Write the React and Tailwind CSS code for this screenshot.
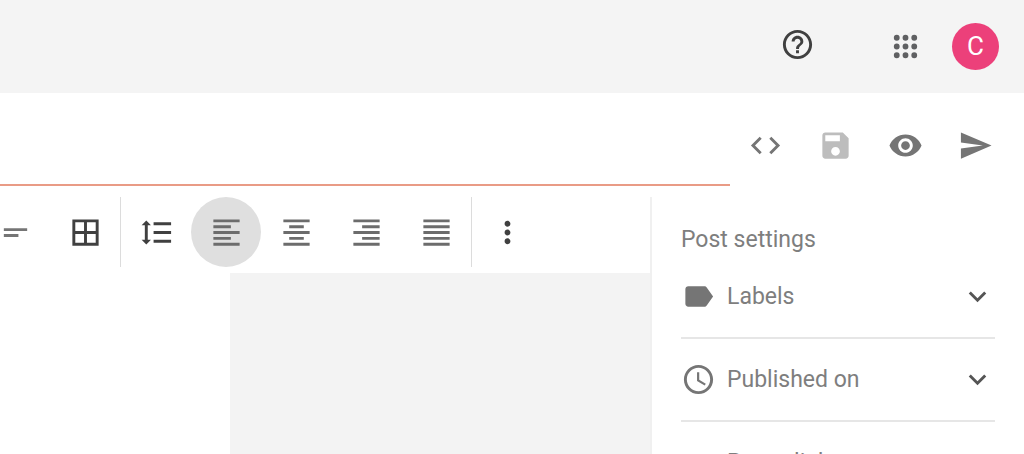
import React, { useState } from 'react';
import clsx from 'clsx';

const icons = {
  help: 'M11 18h2v-2h-2v2zm1-16C6.48 2 2 6.48 2 12s4.48 10 10 10 10-4.48 10-10S17.52 2 12 2zm0 18c-4.41 0-8-3.59-8-8s3.59-8 8-8 8 3.59 8 8-3.59 8-8 8zm0-14c-2.21 0-4 1.79-4 4h2c0-1.1.9-2 2-2s2 .9 2 2c0 2-3 1.75-3 5h2c0-2.25 3-2.5 3-5 0-2.21-1.79-4-4-4z',
  apps: 'M6 8a2 2 0 1 0 0-4 2 2 0 0 0 0 4zm6 0a2 2 0 1 0 0-4 2 2 0 0 0 0 4zm6 0a2 2 0 1 0 0-4 2 2 0 0 0 0 4zM6 14a2 2 0 1 0 0-4 2 2 0 0 0 0 4zm6 0a2 2 0 1 0 0-4 2 2 0 0 0 0 4zm6 0a2 2 0 1 0 0-4 2 2 0 0 0 0 4zM6 20a2 2 0 1 0 0-4 2 2 0 0 0 0 4zm6 0a2 2 0 1 0 0-4 2 2 0 0 0 0 4zm6 0a2 2 0 1 0 0-4 2 2 0 0 0 0 4z',
  code: 'M9.4 16.6L4.8 12l4.6-4.6L8 6l-6 6 6 6 1.4-1.4zm5.2 0l4.6-4.6-4.6-4.6L16 6l6 6-6 6-1.4-1.4z',
  save: 'M17 3H5c-1.11 0-2 .9-2 2v14c0 1.1.89 2 2 2h14c1.1 0 2-.9 2-2V7l-4-4zm-5 16c-1.66 0-3-1.34-3-3s1.34-3 3-3 3 1.34 3 3-1.34 3-3 3zm3-10H5V5h10v4z',
  preview: 'M12 4.5C7 4.5 2.73 7.61 1 12c1.73 4.39 6 7.5 11 7.5s9.27-3.11 11-7.5c-1.73-4.39-6-7.5-11-7.5zM12 17c-2.76 0-5-2.24-5-5s2.24-5 5-5 5 2.24 5 5-2.24 5-5 5zm0-8c-1.66 0-3 1.34-3 3s1.34 3 3 3 3-1.34 3-3-1.34-3-3-3z',
  send: 'M2.01 21L23 12 2.01 3 2 10l15 2-15 2z',
  shortText: 'M4 9h16v2H4V9zm0 4h10v2H4v-2z',
  table: 'M3 3v18h18V3H3zm8 16H5v-6h6v6zm0-8H5V5h6v6zm8 8h-6v-6h6v6zm0-8h-6V5h6v6z',
  lineSpacing: 'M6 7h2.2L5 3.8 1.8 7H4v10H1.8L5 20.2 8.2 17H6V7zm4-2v2h12V5H10zm0 14h12v-2H10v2zm0-6h12v-2H10v2z',
  alignLeft: 'M15 15H3v2h12v-2zm0-8H3v2h12V7zM3 13h18v-2H3v2zm0 8h18v-2H3v2zM3 3v2h18V3H3z',
  alignCenter: 'M7 15v2h10v-2H7zm-4 6h18v-2H3v2zm0-8h18v-2H3v2zm4-6v2h10V7H7zM3 3v2h18V3H3z',
  alignRight: 'M3 21h18v-2H3v2zm6-4h12v-2H9v2zm-6-4h18v-2H3v2zm6-4h12V7H9v2zM3 3v2h18V3H3z',
  justify: 'M3 21h18v-2H3v2zm0-4h18v-2H3v2zm0-4h18v-2H3v2zm0-4h18V7H3v2zm0-6v2h18V3H3z',
  more: 'M12 8c1.1 0 2-.9 2-2s-.9-2-2-2-2 .9-2 2 .9 2 2 2zm0 2c-1.1 0-2 .9-2 2s.9 2 2 2 2-.9 2-2-.9-2-2-2zm0 6c-1.1 0-2 .9-2 2s.9 2 2 2 2-.9 2-2-.9-2-2-2z',
  label: 'M17.63 5.84C17.27 5.33 16.67 5 16 5L5 5.01C3.9 5.01 3 5.9 3 7v10c0 1.1.9 1.99 2 1.99L16 19c.67 0 1.27-.33 1.63-.84L22 12l-4.37-6.16z',
  schedule: 'M11.99 2C6.47 2 2 6.48 2 12s4.47 10 9.99 10C17.52 22 22 17.52 22 12S17.52 2 11.99 2zM12 20c-4.42 0-8-3.58-8-8s3.58-8 8-8 8 3.58 8 8-3.58 8-8 8zm.5-13H11v6l5.25 3.15.75-1.23-4.5-2.67z',
  link: 'M3.9 12c0-1.71 1.39-3.1 3.1-3.1h4V7H7c-2.76 0-5 2.24-5 5s2.24 5 5 5h4v-1.9H7c-1.71 0-3.1-1.39-3.1-3.1zM8 13h8v-2H8v2zm9-6h-4v1.9h4c1.71 0 3.1 1.39 3.1 3.1s-1.39 3.1-3.1 3.1h-4V17h4c2.76 0 5-2.24 5-5s-2.24-5-5-5z',
  expand: 'M7.41 8.59L12 13.17l4.59-4.58L18 10l-6 6-6-6 1.41-1.41z',
};

const Icon = ({ name, className }) => (
  <svg viewBox="0 0 24 24" fill="currentColor" aria-hidden="true" className={clsx('size-[35px] shrink-0', className)}>
    <path d={icons[name]} />
  </svg>
);

const IconButton = ({ icon, label, className, ...props }) => (
  <button
    type="button"
    aria-label={label}
    className={clsx('flex size-[70px] shrink-0 items-center justify-center rounded-full', className)}
    {...props}
  >
    <Icon name={icon} />
  </button>
);

const Divider = () => <div className="w-px shrink-0 bg-[#dcdcdc]" />;

const alignments = [
  { id: 'left', icon: 'alignLeft', label: 'Align left' },
  { id: 'center', icon: 'alignCenter', label: 'Align center' },
  { id: 'right', icon: 'alignRight', label: 'Align right' },
  { id: 'justify', icon: 'justify', label: 'Justify' },
];

const settings = [
  { icon: 'label', title: 'Labels' },
  { icon: 'schedule', title: 'Published on' },
  { icon: 'link', title: 'Permalink' },
];

const Toolbar = () => {
  const [align, setAlign] = useState('left');

  return (
    <div role="toolbar" aria-label="Formatting" className="-ml-5 flex text-[#404040]">
      <IconButton icon="shortText" label="Paragraph" className="text-[#757575]" />
      <IconButton icon="table" label="Insert table" />
      <Divider />
      <IconButton icon="lineSpacing" label="Line spacing" />
      {alignments.map(({ id, icon, label }) => (
        <IconButton
          key={id}
          icon={icon}
          label={label}
          aria-pressed={align === id}
          onClick={() => setAlign(id)}
          className={clsx('text-[#6c6c6c]', align === id && 'bg-[#dfdfdf]')}
        />
      ))}
      <Divider />
      <IconButton icon="more" label="More options" />
    </div>
  );
};

const PostSettings = () => (
  <aside className="w-[374px] shrink-0 border-l-2 border-[#f0f0f0] pt-[26px] pr-[29px] pl-[29px] text-[23px] leading-[33px] text-[#7e7e7e]">
    <h2>Post settings</h2>
    <ul>
      {settings.map(({ icon, title }) => (
        <li key={title} className="border-b-2 border-[#e6e6e6]">
          <button type="button" aria-expanded="false" className="flex h-[81px] w-full items-center gap-[11px] text-left">
            <Icon name={icon} className="text-[#757575]" />
            <span className="flex-1">{title}</span>
            <Icon name="expand" className="text-[#555555]" />
          </button>
        </li>
      ))}
    </ul>
  </aside>
);

const App = () => {
  const [title, setTitle] = useState('');

  return (
    <div className="flex h-screen flex-col overflow-hidden bg-white font-['Roboto',sans-serif]">
      <header className="flex h-[93px] shrink-0 items-center justify-end bg-[#f4f4f4] pr-[25px]">
        <button type="button" aria-label="Help" className="mr-[73px] pb-1 text-[#404040]">
          <Icon name="help" />
        </button>
        <button type="button" aria-label="Google apps" className="mr-[29px] text-[#5f6062]">
          <Icon name="apps" />
        </button>
        <button type="button" aria-label="Account" className="size-[47px] rounded-full bg-[#ec407a] text-[26px] text-white">
          C
        </button>
      </header>

      <div className="flex h-[93px] shrink-0 pr-3.5">
        <input
          type="text"
          aria-label="Title"
          value={title}
          onChange={(e) => setTitle(e.target.value)}
          className="min-w-0 flex-1 border-b-2 border-[#e99b86] px-4 text-2xl outline-none"
        />
        <div className="flex pt-[17px] text-[#757575]">
          <IconButton icon="code" label="HTML view" />
          <IconButton icon="save" label="Save" disabled className="text-[#bdbdbd]" />
          <IconButton icon="preview" label="Preview" />
          <IconButton icon="send" label="Publish" />
        </div>
      </div>

      <div className="flex min-h-0 flex-1 pt-[11px]">
        <main className="flex min-w-0 flex-1 flex-col gap-1.5">
          <Toolbar />
          <div className="flex flex-1">
            <div role="textbox" aria-label="Post body" contentEditable suppressContentEditableWarning className="w-[230px] outline-none" />
            <div className="flex-1 bg-[#f3f3f3]" />
          </div>
        </main>
        <PostSettings />
      </div>
    </div>
  );
};

export default App;
